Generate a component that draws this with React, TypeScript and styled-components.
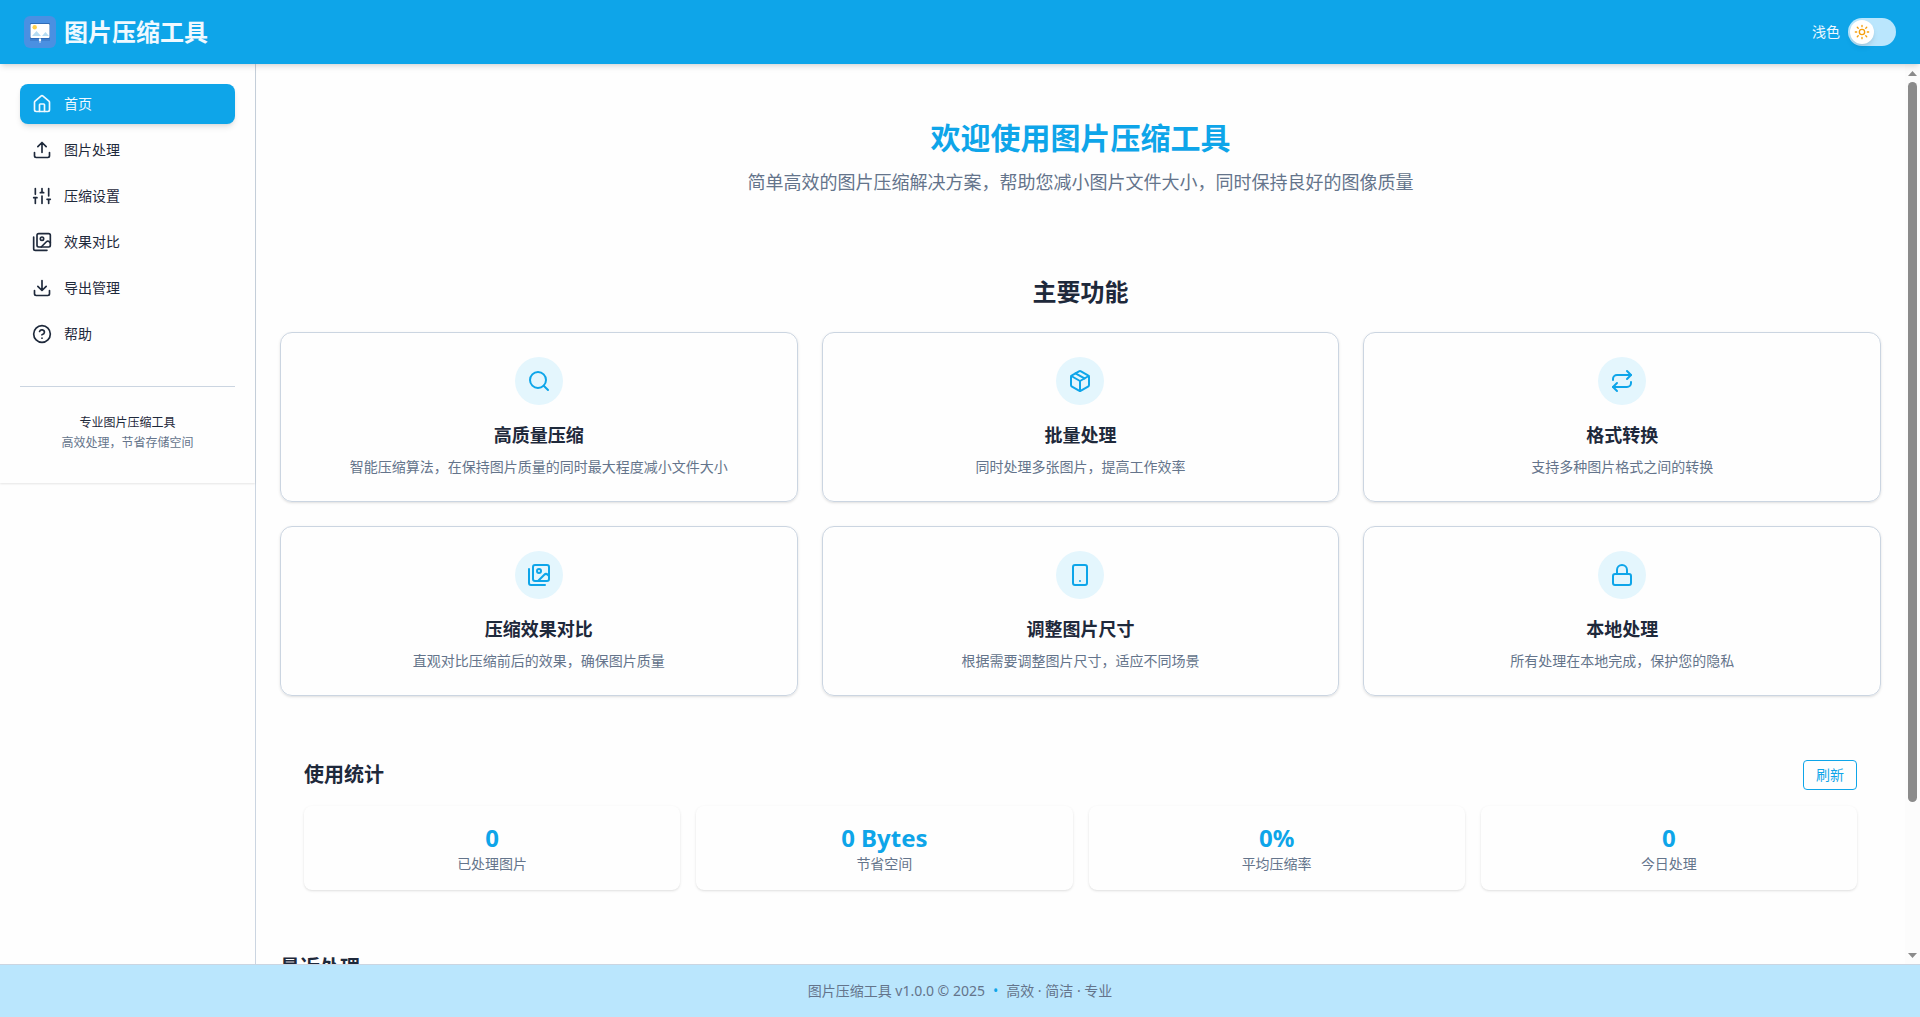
import React, { useCallback, useLayoutEffect, useRef, useState } from 'react';
import styled, { createGlobalStyle } from 'styled-components';

const color = {
  primary: '#0ea5e9',
  primaryLight: '#bae6fd',
  onPrimary: '#f0f9ff',
  tint: '#e4f6fd',
  text: '#1e293b',
  muted: '#64748b',
  border: '#cbd5e1',
  surface: '#fefefe',
  rail: '#8b8b8b',
};

const shadow = {
  small: '0 1px 3px rgba(0, 0, 0, 0.1), 0 1px 2px -1px rgba(0, 0, 0, 0.1)',
  medium: '0 4px 6px -1px rgba(0, 0, 0, 0.1), 0 2px 4px -2px rgba(0, 0, 0, 0.1)',
};

const GlobalStyle = createGlobalStyle`
  *, *::before, *::after { box-sizing: border-box; }
  body {
    margin: 0;
    font-family: "Noto Sans", "Noto Sans CJK SC", sans-serif;
    font-size: 14px;
    line-height: 20px;
    color: ${color.text};
    background: ${color.surface};
  }
  h1, h2, h3, p, ul { margin: 0; padding: 0; }
  button { font: inherit; cursor: pointer; }
`;

const Shell = styled.div`
  display: flex;
  flex-direction: column;
  height: 100vh;
`;

const Header = styled.header`
  display: flex;
  align-items: center;
  justify-content: space-between;
  height: 64px;
  flex: none;
  padding: 0 24px;
  color: ${color.onPrimary};
  background: ${color.primary};
  box-shadow: ${shadow.medium};
  z-index: 1;
`;

const Brand = styled.div`
  display: flex;
  align-items: center;
  gap: 8px;
`;

const BrandName = styled.h1`
  font-size: 24px;
  line-height: 32px;
  font-weight: 700;
`;

const ThemeSwitch = styled.label`
  display: flex;
  align-items: center;
  gap: 8px;
  cursor: pointer;
`;

const SwitchInput = styled.input`
  appearance: none;
  width: 48px;
  height: 28px;
  margin: 0;
  border-radius: 14px;
  background: ${color.primaryLight};
  cursor: pointer;
`;

const SwitchTrack = styled.span`
  display: grid;
  align-items: center;
  & > * { grid-area: 1 / 1; }
`;

const Knob = styled.span<{ $on: boolean }>`
  display: flex;
  align-items: center;
  justify-content: center;
  width: 24px;
  height: 24px;
  margin: 0 2px;
  justify-self: ${p => (p.$on ? 'end' : 'start')};
  border-radius: 50%;
  color: #f59e0b;
  background: #ffffff;
  box-shadow: ${shadow.medium};
  pointer-events: none;
`;

const Body = styled.div`
  display: flex;
  flex: 1;
  min-height: 0;
`;

const Sidebar = styled.aside`
  width: 256px;
  flex: none;
  border-right: 1px solid ${color.border};
`;

const SidebarPanel = styled.div`
  padding: 20px 20px 4px;
  box-shadow: 0 1px 2px rgba(0, 0, 0, 0.1);
`;

const NavList = styled.ul`
  display: flex;
  flex-direction: column;
  gap: 6px;
  list-style: none;
`;

const NavLink = styled.a<{ $active?: boolean }>`
  display: flex;
  align-items: center;
  gap: 12px;
  height: 40px;
  padding: 0 12px;
  border-radius: 8px;
  text-decoration: none;
  color: ${p => (p.$active ? color.onPrimary : color.text)};
  background: ${p => (p.$active ? color.primary : 'transparent')};
  box-shadow: ${p => (p.$active ? shadow.medium : 'none')};
`;

const SidebarNote = styled.div`
  margin-top: 32px;
  padding: 26px 0;
  border-top: 1px solid ${color.border};
  font-size: 12px;
  text-align: center;
`;

const Muted = styled.p`
  color: ${color.muted};
`;

const Content = styled.main`
  flex: 1;
  min-width: 0;
  padding: 24px;
  overflow-y: auto;
  scrollbar-width: none;
`;

const Hero = styled.section`
  padding: 32px 0;
  margin-bottom: 48px;
  text-align: center;
`;

const HeroTitle = styled.h2`
  margin-bottom: 12px;
  font-size: 30px;
  line-height: 36px;
  font-weight: 700;
  color: ${color.primary};
`;

const HeroText = styled.p`
  font-size: 18px;
  line-height: 28px;
  color: ${color.muted};
`;

const FeaturesTitle = styled.h2`
  margin-bottom: 24px;
  font-size: 24px;
  line-height: 32px;
  font-weight: 700;
  text-align: center;
`;

const FeatureGrid = styled.div`
  display: grid;
  grid-template-columns: repeat(3, 1fr);
  gap: 24px;
`;

const FeatureCard = styled.article`
  display: flex;
  flex-direction: column;
  align-items: center;
  padding: 24px;
  border: 1px solid ${color.border};
  border-radius: 12px;
  text-align: center;
  box-shadow: ${shadow.small};
`;

const FeatureIcon = styled.div`
  display: flex;
  align-items: center;
  justify-content: center;
  width: 48px;
  height: 48px;
  margin-bottom: 16px;
  border-radius: 50%;
  color: ${color.primary};
  background: ${color.tint};
`;

const FeatureName = styled.h3`
  margin-bottom: 8px;
  font-size: 18px;
  line-height: 28px;
  font-weight: 700;
`;

const Stats = styled.section`
  margin: 40px 0;
  padding: 24px;
`;

const SectionBar = styled.div`
  display: flex;
  align-items: center;
  justify-content: space-between;
  margin-bottom: 16px;
`;

const SectionTitle = styled.h2`
  font-size: 20px;
  line-height: 28px;
  font-weight: 700;
`;

const RefreshButton = styled.button`
  padding: 4px 12px;
  border: 1px solid ${color.primary};
  border-radius: 4px;
  color: ${color.primary};
  background: transparent;
`;

const StatGrid = styled.div`
  display: grid;
  grid-template-columns: repeat(4, 1fr);
  gap: 16px;
`;

const StatCard = styled.div`
  padding: 16px;
  border-radius: 8px;
  text-align: center;
  box-shadow: ${shadow.small};
`;

const StatValue = styled.p`
  font-size: 24px;
  line-height: 32px;
  font-weight: 700;
  color: ${color.primary};
`;

const RecentList = styled.ul`
  min-height: 122px;
  margin-top: 16px;
  list-style: none;
`;

const Scrollbar = styled.div`
  display: flex;
  flex-direction: column;
  width: 15px;
  flex: none;
  background: #fcfcfc;
`;

const ScrollButton = styled.button`
  display: flex;
  align-items: center;
  justify-content: center;
  height: 18px;
  padding: 0;
  border: 0;
  background: none;
`;

const ScrollTrack = styled.div`
  flex: 1;
  padding: 0 3px;
`;

const ScrollThumb = styled.div`
  border-radius: 5px;
  background: ${color.rail};
`;

const Footer = styled.footer`
  display: flex;
  align-items: center;
  justify-content: center;
  gap: 8px;
  height: 53px;
  flex: none;
  border-top: 1px solid ${color.border};
  color: ${color.muted};
  background: ${color.primaryLight};
`;

const Dot = styled.span`
  color: ${color.primary};
`;

function Icon({ size = 24, children }: { size?: number; children: React.ReactNode }) {
  return (
    <svg width={size} height={size} viewBox="0 0 24 24" fill="none" stroke="currentColor" strokeWidth="2" strokeLinecap="round" strokeLinejoin="round" aria-hidden="true">
      {children}
    </svg>
  );
}

const glyph = {
  home: (
    <>
      <path d="M15 21v-8a1 1 0 0 0-1-1h-4a1 1 0 0 0-1 1v8" />
      <path d="M3 10a2 2 0 0 1 .709-1.528l7-5.999a2 2 0 0 1 2.582 0l7 5.999A2 2 0 0 1 21 10v9a2 2 0 0 1-2 2H5a2 2 0 0 1-2-2z" />
    </>
  ),
  upload: <path d="M21 15v4a2 2 0 0 1-2 2H5a2 2 0 0 1-2-2v-4M17 8l-5-5-5 5M12 3v12" />,
  sliders: <path d="M4 21v-7M4 10V3M12 21v-9M12 8V3M20 21v-5M20 12V3M2 14h4M10 8h4M18 16h4" />,
  images: (
    <>
      <path d="M18 22H4a2 2 0 0 1-2-2V6" />
      <path d="m22 13-1.296-1.296a2.41 2.41 0 0 0-3.408 0L11 18" />
      <circle cx="12" cy="8" r="2" />
      <rect width="16" height="16" x="6" y="2" rx="2" />
    </>
  ),
  download: <path d="M21 15v4a2 2 0 0 1-2 2H5a2 2 0 0 1-2-2v-4M7 10l5 5 5-5M12 15V3" />,
  help: (
    <>
      <circle cx="12" cy="12" r="10" />
      <path d="M9.09 9a3 3 0 0 1 5.83 1c0 2-3 3-3 3M12 17h.01" />
    </>
  ),
  search: (
    <>
      <circle cx="11" cy="11" r="8" />
      <path d="m21 21-4.3-4.3" />
    </>
  ),
  box: (
    <>
      <path d="m7.5 4.27 9 5.15" />
      <path d="M21 8a2 2 0 0 0-1-1.73l-7-4a2 2 0 0 0-2 0l-7 4A2 2 0 0 0 3 8v8a2 2 0 0 0 1 1.73l7 4a2 2 0 0 0 2 0l7-4A2 2 0 0 0 21 16Z" />
      <path d="m3.3 7 8.7 5 8.7-5M12 22V12" />
    </>
  ),
  repeat: (
    <>
      <path d="m17 2 4 4-4 4" />
      <path d="M3 11v-1a4 4 0 0 1 4-4h14" />
      <path d="m7 22-4-4 4-4" />
      <path d="M21 13v1a4 4 0 0 1-4 4H3" />
    </>
  ),
  device: (
    <>
      <rect width="14" height="20" x="5" y="2" rx="2" />
      <path d="M12 18h.01" />
    </>
  ),
  lock: (
    <>
      <rect width="18" height="11" x="3" y="11" rx="2" />
      <path d="M7 11V7a5 5 0 0 1 10 0v4" />
    </>
  ),
  sun: (
    <>
      <circle cx="12" cy="12" r="4" />
      <path d="M12 2v2M12 20v2M4.93 4.93l1.41 1.41M17.66 17.66l1.41 1.41M2 12h2M20 12h2M6.34 17.66l-1.41 1.41M19.07 4.93l-1.41 1.41" />
    </>
  ),
};

function Logo() {
  return (
    <svg width="32" height="32" viewBox="0 0 32 32" aria-hidden="true">
      <rect width="32" height="32" rx="6" fill="#4a90e2" />
      <path d="M6 23h20v2H6z" fill="#3f80d0" />
      <rect x="6" y="7" width="20" height="16" rx="1" fill="#2f6cb8" />
      <rect x="6.5" y="8" width="19" height="14" rx="1" fill="#ffffff" />
      <circle cx="10.7" cy="11.3" r="2.2" fill="#ffd04a" />
      <path d="M8 20l4.5-5 4.5 5zM18 20l3.5-4 3.5 4z" fill="#b5dcf3" />
      <path d="M16 22v5" stroke="#c8dcf5" strokeWidth="1" />
      <circle cx="16" cy="24" r="1.2" fill="#ffffff" />
    </svg>
  );
}

type GlyphName = keyof typeof glyph;

const navItems: { label: string; icon: GlyphName }[] = [
  { label: '首页', icon: 'home' },
  { label: '图片处理', icon: 'upload' },
  { label: '压缩设置', icon: 'sliders' },
  { label: '效果对比', icon: 'images' },
  { label: '导出管理', icon: 'download' },
  { label: '帮助', icon: 'help' },
];

const features: { name: string; text: string; icon: GlyphName }[] = [
  { name: '高质量压缩', text: '智能压缩算法，在保持图片质量的同时最大程度减小文件大小', icon: 'search' },
  { name: '批量处理', text: '同时处理多张图片，提高工作效率', icon: 'box' },
  { name: '格式转换', text: '支持多种图片格式之间的转换', icon: 'repeat' },
  { name: '压缩效果对比', text: '直观对比压缩前后的效果，确保图片质量', icon: 'images' },
  { name: '调整图片尺寸', text: '根据需要调整图片尺寸，适应不同场景', icon: 'device' },
  { name: '本地处理', text: '所有处理在本地完成，保护您的隐私', icon: 'lock' },
];

const stats = [
  { value: '0', label: '已处理图片' },
  { value: '0 Bytes', label: '节省空间' },
  { value: '0%', label: '平均压缩率' },
  { value: '0', label: '今日处理' },
];

export default function App() {
  const contentRef = useRef<HTMLElement>(null);
  const [thumb, setThumb] = useState({ size: 1, start: 0 });
  const [dark, setDark] = useState(false);

  const measure = useCallback(() => {
    const el = contentRef.current;
    if (!el) return;
    const track = el.clientHeight - 36;
    setThumb({
      size: (track * el.clientHeight) / el.scrollHeight,
      start: (track * el.scrollTop) / el.scrollHeight,
    });
  }, []);

  useLayoutEffect(() => {
    measure();
    window.addEventListener('resize', measure);
    return () => window.removeEventListener('resize', measure);
  }, [measure]);

  const scrollBy = (top: number) => contentRef.current?.scrollBy({ top, behavior: 'smooth' });

  return (
    <Shell>
      <GlobalStyle />
      <Header>
        <Brand>
          <Logo />
          <BrandName>图片压缩工具</BrandName>
        </Brand>
        <ThemeSwitch>
          {dark ? '深色' : '浅色'}
          <SwitchTrack>
            <SwitchInput type="checkbox" role="switch" checked={dark} onChange={e => setDark(e.target.checked)} />
            <Knob $on={dark}><Icon size={16}>{glyph.sun}</Icon></Knob>
          </SwitchTrack>
        </ThemeSwitch>
      </Header>
      <Body>
        <Sidebar>
          <SidebarPanel>
            <nav>
              <NavList>
                {navItems.map((item, i) => (
                  <li key={item.label}>
                    <NavLink href="#" $active={i === 0} aria-current={i === 0 ? 'page' : undefined}>
                      <Icon size={20}>{glyph[item.icon]}</Icon>
                      {item.label}
                    </NavLink>
                  </li>
                ))}
              </NavList>
            </nav>
            <SidebarNote>
              <p>专业图片压缩工具</p>
              <Muted>高效处理，节省存储空间</Muted>
            </SidebarNote>
          </SidebarPanel>
        </Sidebar>
        <Content ref={contentRef} onScroll={measure}>
          <Hero>
            <HeroTitle>欢迎使用图片压缩工具</HeroTitle>
            <HeroText>简单高效的图片压缩解决方案，帮助您减小图片文件大小，同时保持良好的图像质量</HeroText>
          </Hero>
          <section>
            <FeaturesTitle>主要功能</FeaturesTitle>
            <FeatureGrid>
              {features.map(f => (
                <FeatureCard key={f.name}>
                  <FeatureIcon><Icon>{glyph[f.icon]}</Icon></FeatureIcon>
                  <FeatureName>{f.name}</FeatureName>
                  <Muted>{f.text}</Muted>
                </FeatureCard>
              ))}
            </FeatureGrid>
          </section>
          <Stats>
            <SectionBar>
              <SectionTitle>使用统计</SectionTitle>
              <RefreshButton type="button">刷新</RefreshButton>
            </SectionBar>
            <StatGrid>
              {stats.map(s => (
                <StatCard key={s.label}>
                  <StatValue>{s.value}</StatValue>
                  <Muted>{s.label}</Muted>
                </StatCard>
              ))}
            </StatGrid>
          </Stats>
          <section>
            <SectionTitle>最近处理</SectionTitle>
            <RecentList />
          </section>
        </Content>
        <Scrollbar>
          <ScrollButton type="button" aria-label="向上滚动" onClick={() => scrollBy(-80)}>
            <svg width="9" height="5" viewBox="0 0 9 5" fill={color.rail}><path d="M0 5 4.5 0 9 5z" /></svg>
          </ScrollButton>
          <ScrollTrack>
            <ScrollThumb style={{ height: thumb.size, transform: `translateY(${thumb.start}px)` }} />
          </ScrollTrack>
          <ScrollButton type="button" aria-label="向下滚动" onClick={() => scrollBy(80)}>
            <svg width="9" height="5" viewBox="0 0 9 5" fill={color.rail}><path d="M0 0 4.5 5 9 0z" /></svg>
          </ScrollButton>
        </Scrollbar>
      </Body>
      <Footer>
        <span>图片压缩工具 v1.0.0 © 2025</span>
        <Dot>•</Dot>
        <span>高效 · 简洁 · 专业</span>
      </Footer>
    </Shell>
  );
}
